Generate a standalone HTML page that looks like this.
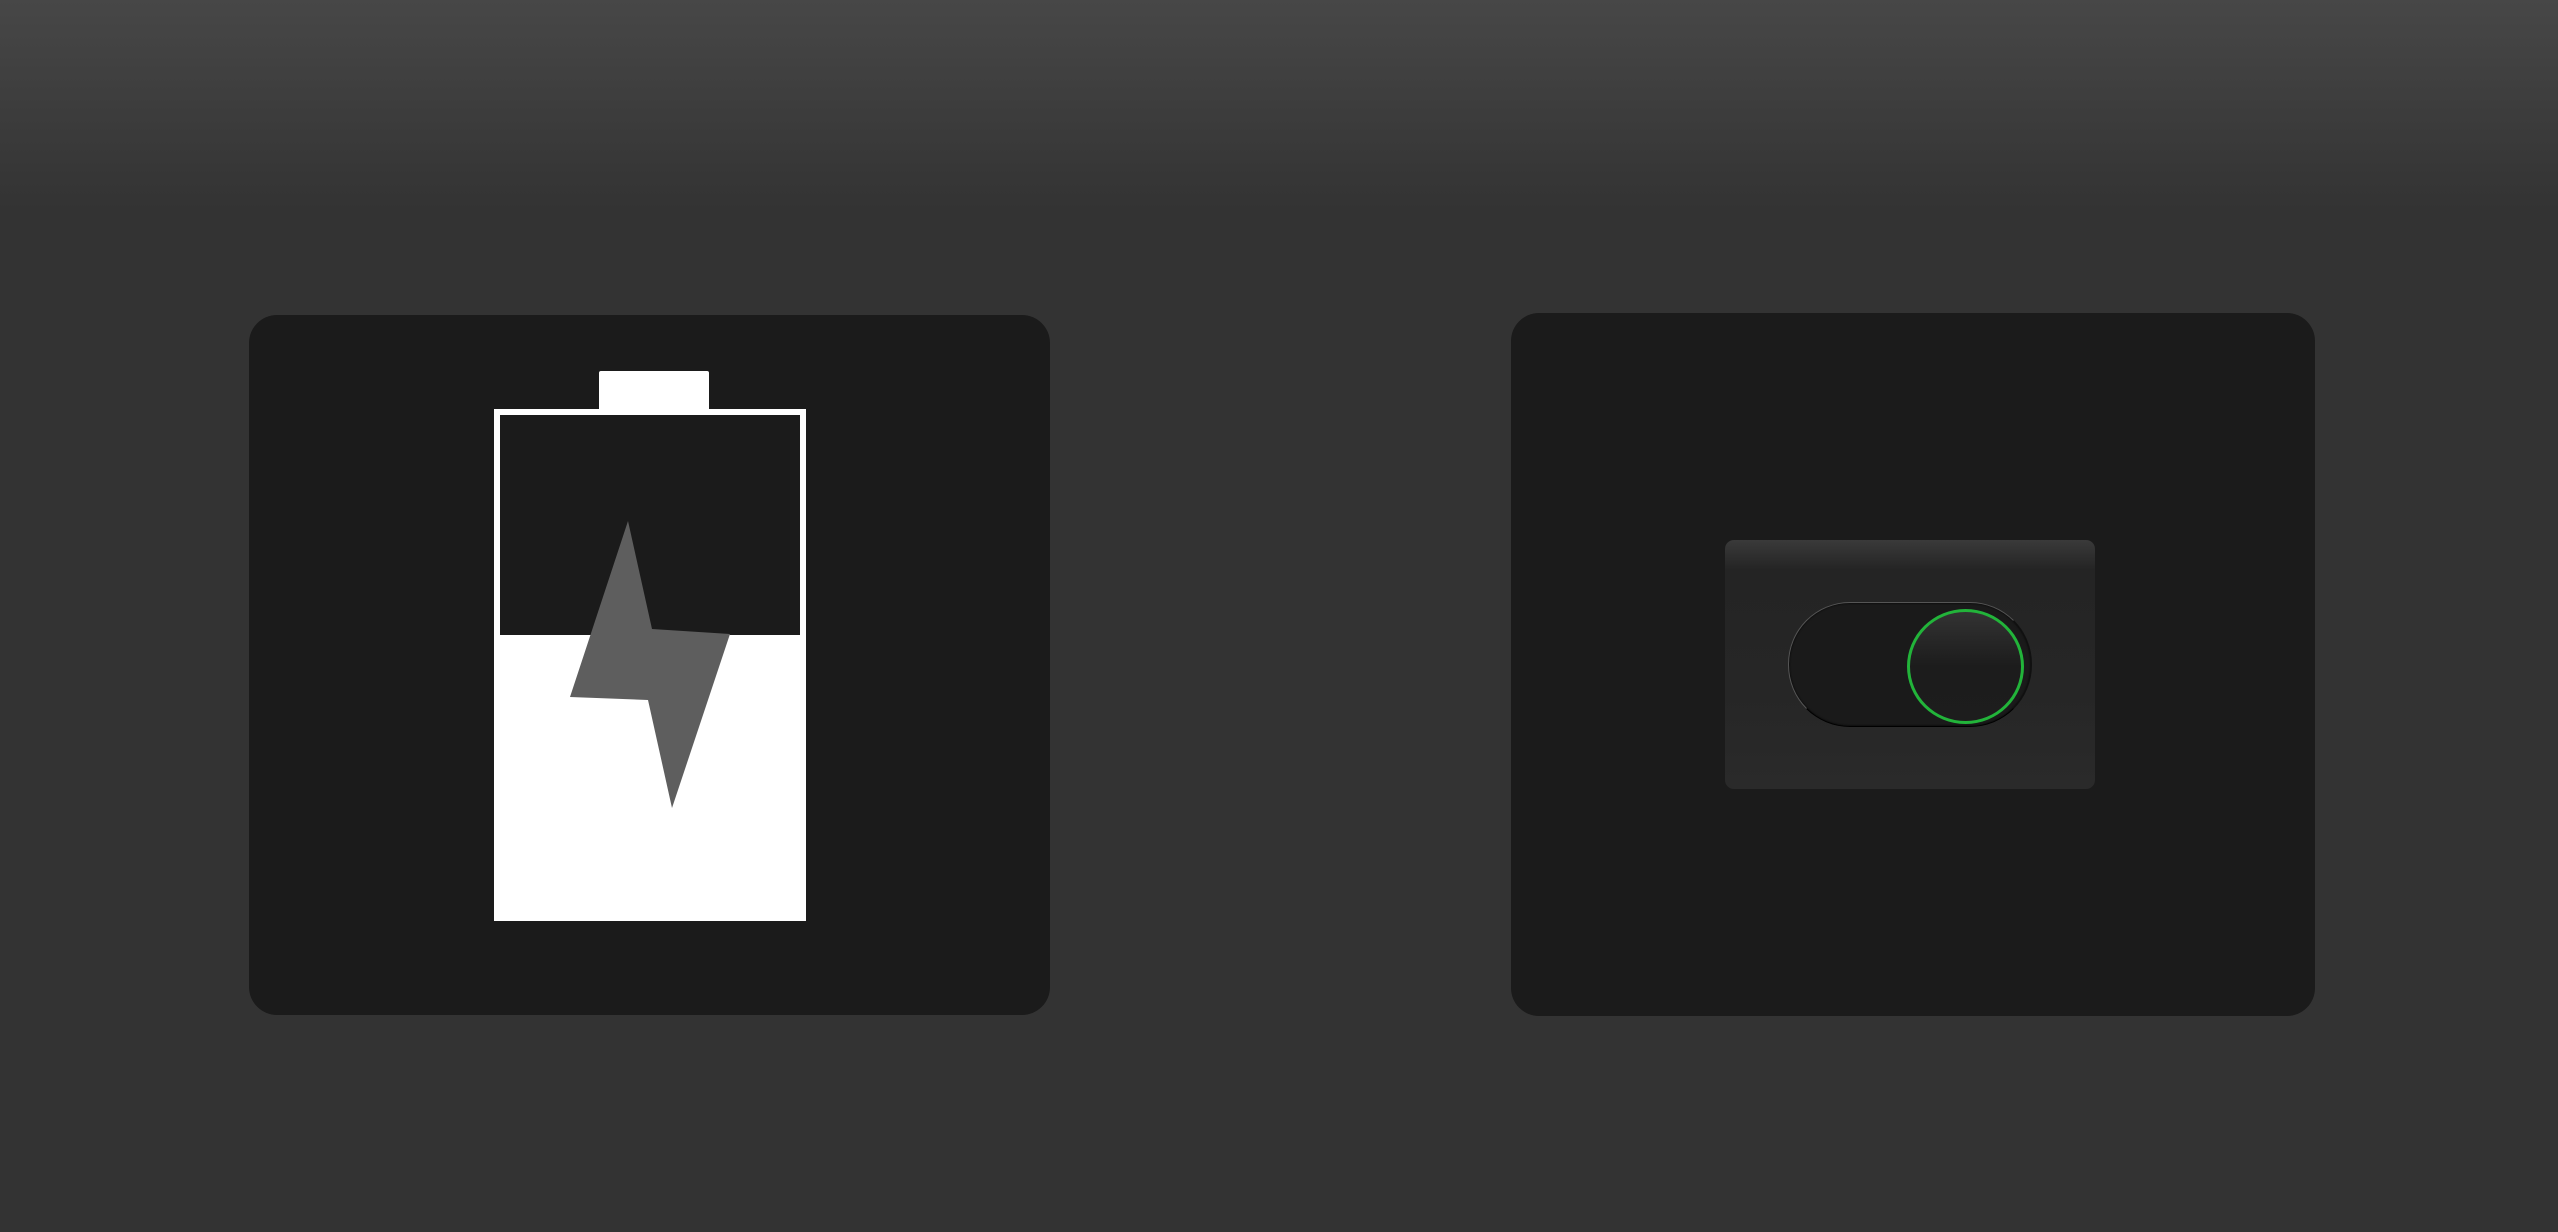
<!DOCTYPE html>
<html><head><meta charset="utf-8"><style>
html,body{margin:0;padding:0}
body{width:2558px;height:1232px;overflow:hidden;position:relative;
background:linear-gradient(#474747 0px,#333 210px,#333 100%);font-family:"Liberation Sans",sans-serif}
.card{position:absolute;background:#1b1b1b;border-radius:28px}
.abs{position:absolute}
</style></head><body>
<div class="card" style="left:249px;top:315px;width:801px;height:700px"></div>
<div class="card" style="left:1511px;top:313px;width:804px;height:703px"></div>
<svg class="abs" style="left:0;top:0" width="2558" height="1232">
  <rect x="599" y="371" width="110" height="44" rx="2" fill="#fff"/>
  <rect x="494" y="409" width="312" height="512" fill="#fff"/>
  <rect x="500" y="415" width="300" height="220" fill="#1b1b1b"/>
  <polygon points="628,521 652,629 730,634 672,808 648,700 570,697" fill="#5e5e5e"/>
</svg>
<div class="abs" style="left:1725px;top:540px;width:370px;height:249px;border-radius:9px;
background:linear-gradient(#3a3a3a 0px,#242424 30px,#262626 60%,#2a2a2a 100%)"></div>
<div class="abs" style="left:1788px;top:602px;width:242px;height:123px;border-radius:62px;background:#1a1a1a;
border:1px solid #555;border-bottom-color:#000;border-right-color:#111;box-shadow:inset 0 0 2px #000"></div>
<div class="abs" style="left:1907px;top:609px;width:111px;height:109px;border-radius:50%;
border:3px solid #22b43a;background:linear-gradient(#333 0%,#1c1c1c 50%,#1d1d1d 100%)"></div>
</body></html>
